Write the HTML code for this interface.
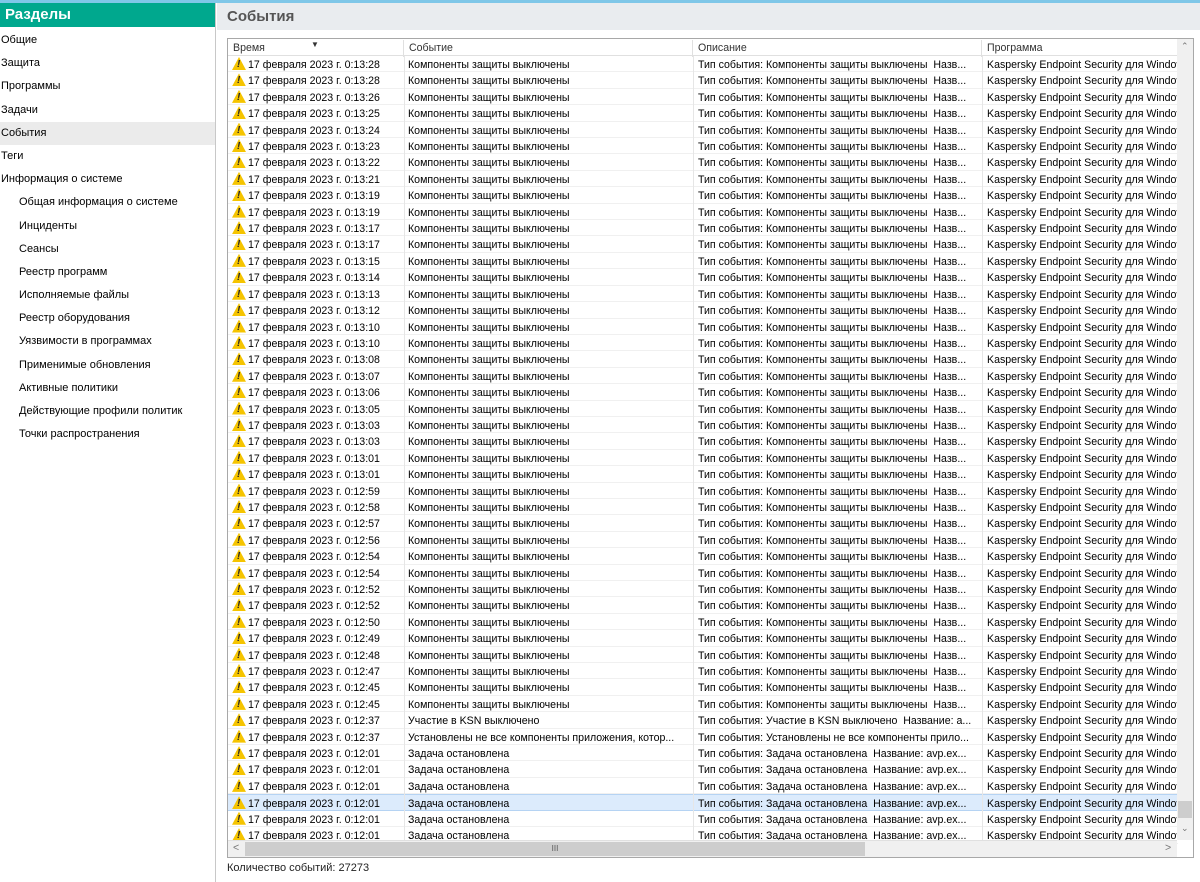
<!DOCTYPE html>
<html><head><meta charset="utf-8"><style>
*{box-sizing:border-box;margin:0;padding:0}
body{width:1200px;height:882px;overflow:hidden;background:#fff;font-family:"Liberation Sans","DejaVu Sans",sans-serif;font-size:11px;color:#000;position:relative}
#topb{position:absolute;left:0;top:0;width:1200px;height:3px;background:#7fc7e8}
#left{position:absolute;left:0;top:3px;width:216px;height:879px;background:#fff;border-right:1px solid #c8c8c8}
#lh{height:24px;background:#00a88e;color:#fff;font-weight:bold;font-size:15px;line-height:24px;padding-left:5px;margin-bottom:2px}
.mi{height:23.2px;line-height:23.2px;padding-left:1px;white-space:nowrap}
.mi.s{padding-left:19px}
.mi.sel{background:#ebebeb}
#rh{position:absolute;left:217px;top:3px;width:983px;height:27px;background:#e9ecef;font-weight:bold;font-size:15px;color:#555;line-height:27px;padding-left:10px}
#tbl{position:absolute;left:227px;top:38px;width:967px;height:820px;border:1px solid #a8a8a8;overflow:hidden;background:#fff;font-size:10.6px}
.hd{position:absolute;left:0;top:0;height:17px;width:950px;border-bottom:1px solid #e0e0e0;background:#fff}
.hc{position:absolute;top:1px;height:17px;line-height:17px;padding-left:5px;border-right:1px solid #e0e0e0;color:#333}
.rows{position:absolute;left:0;top:17px;width:950px}
.r{height:16.42px;line-height:16.4px;position:relative;border-bottom:1px solid #f0f0f0;white-space:nowrap}
.r.sel{background:#dcebfc;border-top:1px solid #b5d3f3;border-bottom:1px solid #b5d3f3}
.r span{position:absolute;top:1px;overflow:hidden;white-space:nowrap}
.c1{left:20px;width:150px}.c2{left:180px;width:285px}.c3{left:470px;width:285px}.c4{left:759px;width:190px}
.w{position:absolute;left:4px;top:1px;width:14px;height:13px;background:#f5c400;clip-path:polygon(50% 0,100% 100%,0 100%)}
.w::after{content:"!";position:absolute;left:5px;top:1px;font-size:10px;font-weight:bold;line-height:13px;color:#222}
.vl{position:absolute;top:17px;width:1px;height:784px;background:#e6e6e6}
#vs{position:absolute;left:949px;top:0;width:16px;height:801px;background:#f0f0f0}
#hs{position:absolute;left:0;top:801px;width:949px;height:17px;background:#f0f0f0;border-top:1px solid #e0e0e0}
#foot{position:absolute;left:227px;top:862px;font-size:11px;color:#222}
</style></head><body>
<div id="topb"></div>
<div id="left">
<div id="lh">Разделы</div>
<div class="mi">Общие</div><div class="mi">Защита</div><div class="mi">Программы</div><div class="mi">Задачи</div>
<div class="mi sel">События</div><div class="mi">Теги</div><div class="mi">Информация о системе</div>
<div class="mi s">Общая информация о системе</div><div class="mi s">Инциденты</div><div class="mi s">Сеансы</div>
<div class="mi s">Реестр программ</div><div class="mi s">Исполняемые файлы</div><div class="mi s">Реестр оборудования</div>
<div class="mi s">Уязвимости в программах</div><div class="mi s">Применимые обновления</div><div class="mi s">Активные политики</div>
<div class="mi s">Действующие профили политик</div><div class="mi s">Точки распространения</div>
</div>
<div id="rh">События</div>
<div id="tbl">
<div class="hd">
<div class="hc" style="left:0;width:176px">Время<span style="position:absolute;left:83px;top:-4px;font-size:8px">▼</span></div>
<div class="hc" style="left:176px;width:289px">Событие</div>
<div class="hc" style="left:465px;width:289px">Описание</div>
<div class="hc" style="left:754px;width:196px">Программа</div>
</div>
<div class="rows">
<div class="r"><i class="w"></i><span class="c1">17 февраля 2023 г. 0:13:28</span><span class="c2">Компоненты защиты выключены</span><span class="c3">Тип события: Компоненты защиты выключены&nbsp; Назв...</span><span class="c4">Kaspersky Endpoint Security для Windows</span></div>
<div class="r"><i class="w"></i><span class="c1">17 февраля 2023 г. 0:13:28</span><span class="c2">Компоненты защиты выключены</span><span class="c3">Тип события: Компоненты защиты выключены&nbsp; Назв...</span><span class="c4">Kaspersky Endpoint Security для Windows</span></div>
<div class="r"><i class="w"></i><span class="c1">17 февраля 2023 г. 0:13:26</span><span class="c2">Компоненты защиты выключены</span><span class="c3">Тип события: Компоненты защиты выключены&nbsp; Назв...</span><span class="c4">Kaspersky Endpoint Security для Windows</span></div>
<div class="r"><i class="w"></i><span class="c1">17 февраля 2023 г. 0:13:25</span><span class="c2">Компоненты защиты выключены</span><span class="c3">Тип события: Компоненты защиты выключены&nbsp; Назв...</span><span class="c4">Kaspersky Endpoint Security для Windows</span></div>
<div class="r"><i class="w"></i><span class="c1">17 февраля 2023 г. 0:13:24</span><span class="c2">Компоненты защиты выключены</span><span class="c3">Тип события: Компоненты защиты выключены&nbsp; Назв...</span><span class="c4">Kaspersky Endpoint Security для Windows</span></div>
<div class="r"><i class="w"></i><span class="c1">17 февраля 2023 г. 0:13:23</span><span class="c2">Компоненты защиты выключены</span><span class="c3">Тип события: Компоненты защиты выключены&nbsp; Назв...</span><span class="c4">Kaspersky Endpoint Security для Windows</span></div>
<div class="r"><i class="w"></i><span class="c1">17 февраля 2023 г. 0:13:22</span><span class="c2">Компоненты защиты выключены</span><span class="c3">Тип события: Компоненты защиты выключены&nbsp; Назв...</span><span class="c4">Kaspersky Endpoint Security для Windows</span></div>
<div class="r"><i class="w"></i><span class="c1">17 февраля 2023 г. 0:13:21</span><span class="c2">Компоненты защиты выключены</span><span class="c3">Тип события: Компоненты защиты выключены&nbsp; Назв...</span><span class="c4">Kaspersky Endpoint Security для Windows</span></div>
<div class="r"><i class="w"></i><span class="c1">17 февраля 2023 г. 0:13:19</span><span class="c2">Компоненты защиты выключены</span><span class="c3">Тип события: Компоненты защиты выключены&nbsp; Назв...</span><span class="c4">Kaspersky Endpoint Security для Windows</span></div>
<div class="r"><i class="w"></i><span class="c1">17 февраля 2023 г. 0:13:19</span><span class="c2">Компоненты защиты выключены</span><span class="c3">Тип события: Компоненты защиты выключены&nbsp; Назв...</span><span class="c4">Kaspersky Endpoint Security для Windows</span></div>
<div class="r"><i class="w"></i><span class="c1">17 февраля 2023 г. 0:13:17</span><span class="c2">Компоненты защиты выключены</span><span class="c3">Тип события: Компоненты защиты выключены&nbsp; Назв...</span><span class="c4">Kaspersky Endpoint Security для Windows</span></div>
<div class="r"><i class="w"></i><span class="c1">17 февраля 2023 г. 0:13:17</span><span class="c2">Компоненты защиты выключены</span><span class="c3">Тип события: Компоненты защиты выключены&nbsp; Назв...</span><span class="c4">Kaspersky Endpoint Security для Windows</span></div>
<div class="r"><i class="w"></i><span class="c1">17 февраля 2023 г. 0:13:15</span><span class="c2">Компоненты защиты выключены</span><span class="c3">Тип события: Компоненты защиты выключены&nbsp; Назв...</span><span class="c4">Kaspersky Endpoint Security для Windows</span></div>
<div class="r"><i class="w"></i><span class="c1">17 февраля 2023 г. 0:13:14</span><span class="c2">Компоненты защиты выключены</span><span class="c3">Тип события: Компоненты защиты выключены&nbsp; Назв...</span><span class="c4">Kaspersky Endpoint Security для Windows</span></div>
<div class="r"><i class="w"></i><span class="c1">17 февраля 2023 г. 0:13:13</span><span class="c2">Компоненты защиты выключены</span><span class="c3">Тип события: Компоненты защиты выключены&nbsp; Назв...</span><span class="c4">Kaspersky Endpoint Security для Windows</span></div>
<div class="r"><i class="w"></i><span class="c1">17 февраля 2023 г. 0:13:12</span><span class="c2">Компоненты защиты выключены</span><span class="c3">Тип события: Компоненты защиты выключены&nbsp; Назв...</span><span class="c4">Kaspersky Endpoint Security для Windows</span></div>
<div class="r"><i class="w"></i><span class="c1">17 февраля 2023 г. 0:13:10</span><span class="c2">Компоненты защиты выключены</span><span class="c3">Тип события: Компоненты защиты выключены&nbsp; Назв...</span><span class="c4">Kaspersky Endpoint Security для Windows</span></div>
<div class="r"><i class="w"></i><span class="c1">17 февраля 2023 г. 0:13:10</span><span class="c2">Компоненты защиты выключены</span><span class="c3">Тип события: Компоненты защиты выключены&nbsp; Назв...</span><span class="c4">Kaspersky Endpoint Security для Windows</span></div>
<div class="r"><i class="w"></i><span class="c1">17 февраля 2023 г. 0:13:08</span><span class="c2">Компоненты защиты выключены</span><span class="c3">Тип события: Компоненты защиты выключены&nbsp; Назв...</span><span class="c4">Kaspersky Endpoint Security для Windows</span></div>
<div class="r"><i class="w"></i><span class="c1">17 февраля 2023 г. 0:13:07</span><span class="c2">Компоненты защиты выключены</span><span class="c3">Тип события: Компоненты защиты выключены&nbsp; Назв...</span><span class="c4">Kaspersky Endpoint Security для Windows</span></div>
<div class="r"><i class="w"></i><span class="c1">17 февраля 2023 г. 0:13:06</span><span class="c2">Компоненты защиты выключены</span><span class="c3">Тип события: Компоненты защиты выключены&nbsp; Назв...</span><span class="c4">Kaspersky Endpoint Security для Windows</span></div>
<div class="r"><i class="w"></i><span class="c1">17 февраля 2023 г. 0:13:05</span><span class="c2">Компоненты защиты выключены</span><span class="c3">Тип события: Компоненты защиты выключены&nbsp; Назв...</span><span class="c4">Kaspersky Endpoint Security для Windows</span></div>
<div class="r"><i class="w"></i><span class="c1">17 февраля 2023 г. 0:13:03</span><span class="c2">Компоненты защиты выключены</span><span class="c3">Тип события: Компоненты защиты выключены&nbsp; Назв...</span><span class="c4">Kaspersky Endpoint Security для Windows</span></div>
<div class="r"><i class="w"></i><span class="c1">17 февраля 2023 г. 0:13:03</span><span class="c2">Компоненты защиты выключены</span><span class="c3">Тип события: Компоненты защиты выключены&nbsp; Назв...</span><span class="c4">Kaspersky Endpoint Security для Windows</span></div>
<div class="r"><i class="w"></i><span class="c1">17 февраля 2023 г. 0:13:01</span><span class="c2">Компоненты защиты выключены</span><span class="c3">Тип события: Компоненты защиты выключены&nbsp; Назв...</span><span class="c4">Kaspersky Endpoint Security для Windows</span></div>
<div class="r"><i class="w"></i><span class="c1">17 февраля 2023 г. 0:13:01</span><span class="c2">Компоненты защиты выключены</span><span class="c3">Тип события: Компоненты защиты выключены&nbsp; Назв...</span><span class="c4">Kaspersky Endpoint Security для Windows</span></div>
<div class="r"><i class="w"></i><span class="c1">17 февраля 2023 г. 0:12:59</span><span class="c2">Компоненты защиты выключены</span><span class="c3">Тип события: Компоненты защиты выключены&nbsp; Назв...</span><span class="c4">Kaspersky Endpoint Security для Windows</span></div>
<div class="r"><i class="w"></i><span class="c1">17 февраля 2023 г. 0:12:58</span><span class="c2">Компоненты защиты выключены</span><span class="c3">Тип события: Компоненты защиты выключены&nbsp; Назв...</span><span class="c4">Kaspersky Endpoint Security для Windows</span></div>
<div class="r"><i class="w"></i><span class="c1">17 февраля 2023 г. 0:12:57</span><span class="c2">Компоненты защиты выключены</span><span class="c3">Тип события: Компоненты защиты выключены&nbsp; Назв...</span><span class="c4">Kaspersky Endpoint Security для Windows</span></div>
<div class="r"><i class="w"></i><span class="c1">17 февраля 2023 г. 0:12:56</span><span class="c2">Компоненты защиты выключены</span><span class="c3">Тип события: Компоненты защиты выключены&nbsp; Назв...</span><span class="c4">Kaspersky Endpoint Security для Windows</span></div>
<div class="r"><i class="w"></i><span class="c1">17 февраля 2023 г. 0:12:54</span><span class="c2">Компоненты защиты выключены</span><span class="c3">Тип события: Компоненты защиты выключены&nbsp; Назв...</span><span class="c4">Kaspersky Endpoint Security для Windows</span></div>
<div class="r"><i class="w"></i><span class="c1">17 февраля 2023 г. 0:12:54</span><span class="c2">Компоненты защиты выключены</span><span class="c3">Тип события: Компоненты защиты выключены&nbsp; Назв...</span><span class="c4">Kaspersky Endpoint Security для Windows</span></div>
<div class="r"><i class="w"></i><span class="c1">17 февраля 2023 г. 0:12:52</span><span class="c2">Компоненты защиты выключены</span><span class="c3">Тип события: Компоненты защиты выключены&nbsp; Назв...</span><span class="c4">Kaspersky Endpoint Security для Windows</span></div>
<div class="r"><i class="w"></i><span class="c1">17 февраля 2023 г. 0:12:52</span><span class="c2">Компоненты защиты выключены</span><span class="c3">Тип события: Компоненты защиты выключены&nbsp; Назв...</span><span class="c4">Kaspersky Endpoint Security для Windows</span></div>
<div class="r"><i class="w"></i><span class="c1">17 февраля 2023 г. 0:12:50</span><span class="c2">Компоненты защиты выключены</span><span class="c3">Тип события: Компоненты защиты выключены&nbsp; Назв...</span><span class="c4">Kaspersky Endpoint Security для Windows</span></div>
<div class="r"><i class="w"></i><span class="c1">17 февраля 2023 г. 0:12:49</span><span class="c2">Компоненты защиты выключены</span><span class="c3">Тип события: Компоненты защиты выключены&nbsp; Назв...</span><span class="c4">Kaspersky Endpoint Security для Windows</span></div>
<div class="r"><i class="w"></i><span class="c1">17 февраля 2023 г. 0:12:48</span><span class="c2">Компоненты защиты выключены</span><span class="c3">Тип события: Компоненты защиты выключены&nbsp; Назв...</span><span class="c4">Kaspersky Endpoint Security для Windows</span></div>
<div class="r"><i class="w"></i><span class="c1">17 февраля 2023 г. 0:12:47</span><span class="c2">Компоненты защиты выключены</span><span class="c3">Тип события: Компоненты защиты выключены&nbsp; Назв...</span><span class="c4">Kaspersky Endpoint Security для Windows</span></div>
<div class="r"><i class="w"></i><span class="c1">17 февраля 2023 г. 0:12:45</span><span class="c2">Компоненты защиты выключены</span><span class="c3">Тип события: Компоненты защиты выключены&nbsp; Назв...</span><span class="c4">Kaspersky Endpoint Security для Windows</span></div>
<div class="r"><i class="w"></i><span class="c1">17 февраля 2023 г. 0:12:45</span><span class="c2">Компоненты защиты выключены</span><span class="c3">Тип события: Компоненты защиты выключены&nbsp; Назв...</span><span class="c4">Kaspersky Endpoint Security для Windows</span></div>
<div class="r"><i class="w"></i><span class="c1">17 февраля 2023 г. 0:12:37</span><span class="c2">Участие в KSN выключено</span><span class="c3">Тип события: Участие в KSN выключено&nbsp; Название: а...</span><span class="c4">Kaspersky Endpoint Security для Windows</span></div>
<div class="r"><i class="w"></i><span class="c1">17 февраля 2023 г. 0:12:37</span><span class="c2">Установлены не все компоненты приложения, котор...</span><span class="c3">Тип события: Установлены не все компоненты прило...</span><span class="c4">Kaspersky Endpoint Security для Windows</span></div>
<div class="r"><i class="w"></i><span class="c1">17 февраля 2023 г. 0:12:01</span><span class="c2">Задача остановлена</span><span class="c3">Тип события: Задача остановлена&nbsp; Название: avp.ex...</span><span class="c4">Kaspersky Endpoint Security для Windows</span></div>
<div class="r"><i class="w"></i><span class="c1">17 февраля 2023 г. 0:12:01</span><span class="c2">Задача остановлена</span><span class="c3">Тип события: Задача остановлена&nbsp; Название: avp.ex...</span><span class="c4">Kaspersky Endpoint Security для Windows</span></div>
<div class="r"><i class="w"></i><span class="c1">17 февраля 2023 г. 0:12:01</span><span class="c2">Задача остановлена</span><span class="c3">Тип события: Задача остановлена&nbsp; Название: avp.ex...</span><span class="c4">Kaspersky Endpoint Security для Windows</span></div>
<div class="r sel"><i class="w"></i><span class="c1">17 февраля 2023 г. 0:12:01</span><span class="c2">Задача остановлена</span><span class="c3">Тип события: Задача остановлена&nbsp; Название: avp.ex...</span><span class="c4">Kaspersky Endpoint Security для Windows</span></div>
<div class="r"><i class="w"></i><span class="c1">17 февраля 2023 г. 0:12:01</span><span class="c2">Задача остановлена</span><span class="c3">Тип события: Задача остановлена&nbsp; Название: avp.ex...</span><span class="c4">Kaspersky Endpoint Security для Windows</span></div>
<div class="r"><i class="w"></i><span class="c1">17 февраля 2023 г. 0:12:01</span><span class="c2">Задача остановлена</span><span class="c3">Тип события: Задача остановлена&nbsp; Название: avp.ex...</span><span class="c4">Kaspersky Endpoint Security для Windows</span></div>
</div>
<div class="vl" style="left:176px"></div><div class="vl" style="left:465px"></div><div class="vl" style="left:754px"></div>
<div id="vs">
<div style="position:absolute;top:2px;left:4px;color:#777;font-size:9px">⌃</div>
<div style="position:absolute;top:762px;left:1px;width:14px;height:17px;background:#cdcdcd"></div>
<div style="position:absolute;top:784px;left:4px;color:#777;font-size:9px">⌄</div>
</div>
<div id="hs">
<div style="position:absolute;left:5px;top:1px;color:#777">&lt;</div>
<div style="position:absolute;left:17px;top:1px;width:620px;height:14px;background:#cdcdcd;text-align:center;line-height:14px;font-size:8px;color:#555">III</div>
<div style="position:absolute;left:937px;top:1px;color:#777">&gt;</div>
</div>
</div>
<div id="foot">Количество событий: 27273</div>
</body></html>
